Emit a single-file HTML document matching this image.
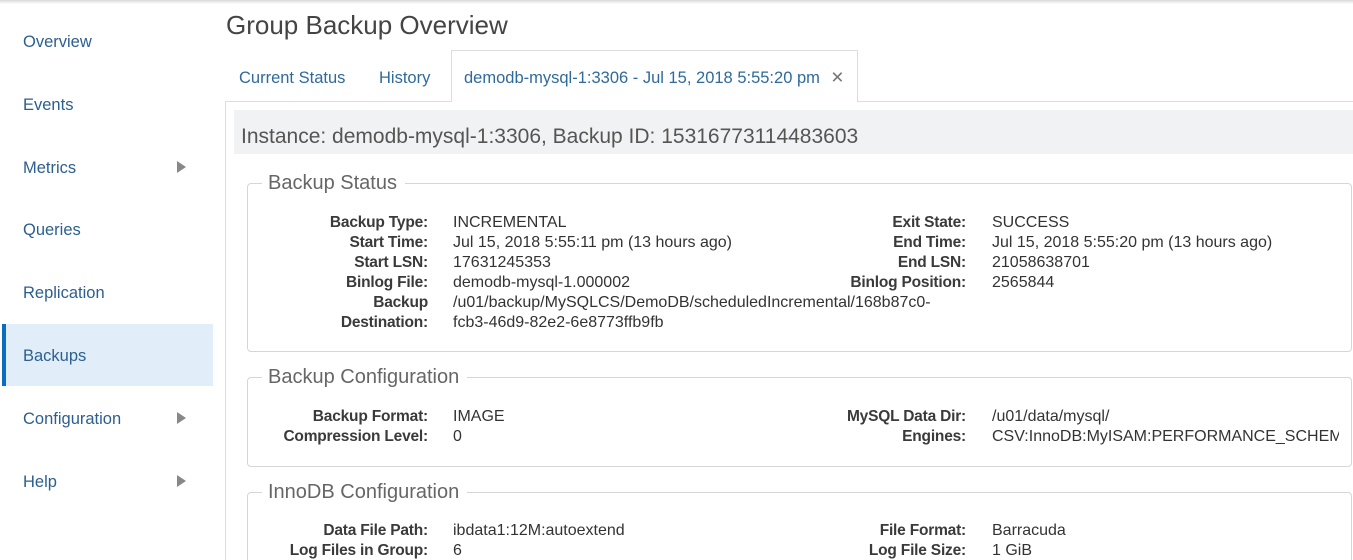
<!DOCTYPE html>
<html style="overflow:hidden;height:560px"><head><meta charset="utf-8"><style>
*{margin:0;padding:0;box-sizing:border-box}
body{width:1353px;height:560px;overflow:hidden;background:#fff;font-family:"Liberation Sans",Arial,sans-serif;position:relative}
.a{position:absolute;white-space:nowrap}
.topsh{position:absolute;left:0;top:0;width:1353px;height:4px;background:linear-gradient(#d8d8d8,#fff)}
.nav{position:absolute;left:23px;font-size:16.5px;color:#2c5f8e;line-height:20px}
.arr{position:absolute;left:177px;width:0;height:0;border-left:9px solid #888;border-top:6px solid transparent;border-bottom:6px solid transparent}
.tab{position:absolute;top:68px;font-size:16.5px;color:#2f6a9c;line-height:20px}
.leg{position:absolute;font-size:20px;color:#666;background:#fff;padding:0 8px 0 6px;line-height:24px}
.fs{position:absolute;left:247px;width:1105px;border:1px solid #d6d6d6;border-radius:4px}
.l{position:absolute;font-size:15.5px;color:#3a3a3a;font-weight:bold;text-align:right;line-height:20px;letter-spacing:-0.2px}
.v{position:absolute;font-size:16px;color:#333;line-height:20px;white-space:nowrap}
</style></head><body>
<div class="topsh"></div>
<div class="nav" style="top:32px">Overview</div>
<div class="nav" style="top:95px">Events</div>
<div class="nav" style="top:158px">Metrics</div><div class="arr" style="top:161px"></div>
<div class="nav" style="top:220px">Queries</div>
<div class="nav" style="top:283px">Replication</div>
<div class="a" style="left:2px;top:324px;width:211px;height:62px;background:#e1eefa;border-left:4px solid #0b6cc0"></div>
<div class="nav" style="top:346px">Backups</div>
<div class="nav" style="top:409px">Configuration</div><div class="arr" style="top:412px"></div>
<div class="nav" style="top:472px">Help</div><div class="arr" style="top:475px"></div>

<div class="a" style="left:226px;top:9px;font-size:26px;color:#444;line-height:32px">Group Backup Overview</div>
<div class="a" style="left:225px;top:101px;width:1128px;height:1px;background:#ddd"></div>
<div class="a" style="left:225px;top:101px;width:1px;height:460px;background:#ddd"></div>
<div class="a" style="left:451px;top:50px;width:407px;height:52px;border:1px solid #ddd;border-bottom:none;background:#fff"></div>
<div class="tab" style="left:239px">Current Status</div>
<div class="tab" style="left:379px">History</div>
<div class="tab" style="left:464px">demodb-mysql-1:3306 - Jul 15, 2018 5:55:20 pm <span style="color:#777;margin-left:6px">✕</span></div>

<div class="a" style="left:234px;top:110px;width:1119px;height:44px;background:#f1f2f4"></div>
<div class="a" style="left:241px;top:124px;font-size:21px;color:#555;line-height:26px">Instance: demodb-mysql-1:3306, Backup ID: 15316773114483603</div>

<div class="fs" style="top:183px;height:169px"></div>
<div class="leg" style="left:262px;top:171px">Backup Status</div>
<div class="l" style="left:228px;width:200px;top:213px">Backup Type:<br>Start Time:<br>Start LSN:<br>Binlog File:<br>Backup<br>Destination:</div>
<div class="v" style="left:453px;top:213px">INCREMENTAL<br>Jul 15, 2018 5:55:11 pm (13 hours ago)<br>17631245353<br>demodb-mysql-1.000002<br>/u01/backup/MySQLCS/DemoDB/scheduledIncremental/168b87c0-<br>fcb3-46d9-82e2-6e8773ffb9fb</div>
<div class="l" style="left:766px;width:200px;top:213px">Exit State:<br>End Time:<br>End LSN:<br>Binlog Position:</div>
<div class="v" style="left:992px;top:213px">SUCCESS<br>Jul 15, 2018 5:55:20 pm (13 hours ago)<br>21058638701<br>2565844</div>

<div class="fs" style="top:377px;height:90px"></div>
<div class="leg" style="left:262px;top:365px">Backup Configuration</div>
<div class="l" style="left:228px;width:200px;top:407px">Backup Format:<br>Compression Level:</div>
<div class="v" style="left:453px;top:407px">IMAGE<br>0</div>
<div class="l" style="left:766px;width:200px;top:407px">MySQL Data Dir:<br>Engines:</div>
<div class="v" style="left:992px;top:407px;width:347px;overflow:hidden">/u01/data/mysql/<br>CSV:InnoDB:MyISAM:PERFORMANCE_SCHEMA</div>

<div class="fs" style="top:492px;height:68px;border-bottom:none;border-radius:4px 4px 0 0"></div>
<div class="leg" style="left:262px;top:480px">InnoDB Configuration</div>
<div class="l" style="left:228px;width:200px;top:521px">Data File Path:<br>Log Files in Group:</div>
<div class="v" style="left:453px;top:521px">ibdata1:12M:autoextend<br>6</div>
<div class="l" style="left:766px;width:200px;top:521px">File Format:<br>Log File Size:</div>
<div class="v" style="left:992px;top:521px">Barracuda<br>1 GiB</div>
</body></html>
